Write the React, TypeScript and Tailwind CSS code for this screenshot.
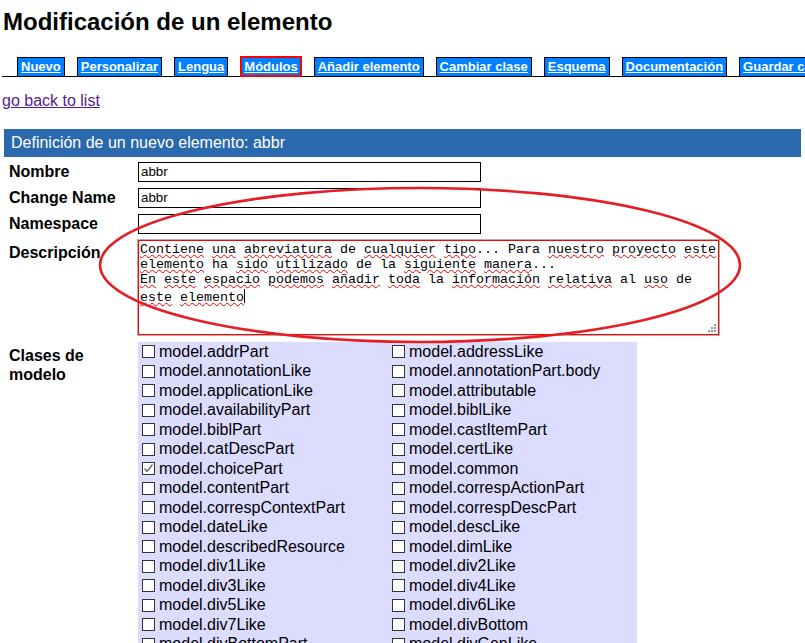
const tabs = [
  'Nuevo',
  'Personalizar',
  'Lengua',
  'Módulos',
  'Añadir elemento',
  'Cambiar clase',
  'Esquema',
  'Documentación',
  'Guardar cambios',
]

const clases = [
  'addrPart', 'addressLike',
  'annotationLike', 'annotationPart.body',
  'applicationLike', 'attributable',
  'availabilityPart', 'biblLike',
  'biblPart', 'castItemPart',
  'catDescPart', 'certLike',
  'choicePart', 'common',
  'contentPart', 'correspActionPart',
  'correspContextPart', 'correspDescPart',
  'dateLike', 'descLike',
  'describedResource', 'dimLike',
  'div1Like', 'div2Like',
  'div3Like', 'div4Like',
  'div5Like', 'div6Like',
  'div7Like', 'divBottom',
  'divBottomPart', 'divGenLike',
]

// words with a spell-check squiggle; the rest are plain
const descLines: [string, boolean][][] = [
  [['Contiene', true], [' ', false], ['una', true], [' ', false], ['abreviatura', true], [' de ', false], ['cualquier', true], [' ', false], ['tipo', true], ['... Para ', false], ['nuestro', true], [' ', false], ['proyecto', true], [' ', false], ['este', true]],
  [['elemento', true], [' ha ', false], ['sido', true], [' ', false], ['utilizado', true], [' de la ', false], ['siguiente', true], [' ', false], ['manera', true], ['...', false]],
  [['En', true], [' ', false], ['este', true], [' ', false], ['espacio', true], [' ', false], ['podemos', true], [' ', false], ['añadir', true], [' ', false], ['toda', true], [' la ', false], ['información', true], [' ', false], ['relativa', true], [' al ', false], ['uso', true], [' de', false]],
  [['este', true], [' ', false], ['elemento', true]],
]

function Check({ checked }: { checked?: boolean }) {
  return (
    <span className="flex h-[13px] w-[13px] shrink-0 items-center justify-center border border-[#333] bg-white">
      {checked && (
        <svg width="11" height="11" viewBox="0 0 11 11">
          <polyline points="1.5,5.5 4,8.5 9.5,1.5" fill="none" stroke="#666" strokeWidth="1.3" />
        </svg>
      )}
    </span>
  )
}

export default function App() {
  return (
    <div className="relative h-[643px] w-[805px] overflow-hidden bg-white font-['Liberation_Sans',Arial,sans-serif] text-black">
      <h1 className="pl-[3px] pt-[8px] text-[24px] font-bold leading-[28px]">Modificación de un elemento</h1>

      <div className="ml-[2px] mt-[21px] flex h-[20px] items-end gap-[12px] whitespace-nowrap border-b border-black pl-[15px]">
        {tabs.map((t) => (
          <span
            key={t}
            className={
              t === 'Módulos'
                ? '-mb-px box-border flex h-[21px] items-center border-2 border-[#ff0000] bg-[#0080ff] px-[2px] text-[13px] font-bold text-white underline'
                : '-mb-px box-border flex h-[20px] items-center border border-black bg-[#0080ff] px-[3px] text-[13px] font-bold text-white underline'
            }
          >
            {t}
          </span>
        ))}
      </div>

      <a href="#" className="ml-[2px] mt-[15px] inline-block text-[16px] leading-[18px] text-[#551a8b] underline">
        go back to list
      </a>

      <div className="mx-[4px] mt-[16px] h-[28px] bg-[#2a69ad] pl-[7px] text-[16px] leading-[28px] text-white">
        Definición de un nuevo elemento: abbr
      </div>

      <div className="mt-[5px] flex flex-col gap-[6px]">
        {[
          ['Nombre', 'abbr'],
          ['Change Name', 'abbr'],
          ['Namespace', ''],
        ].map(([label, value]) => (
          <div key={label} className="flex items-center">
            <span className="w-[138px] shrink-0 pl-[9px] text-[16px] font-bold leading-[18px]">{label}</span>
            <div className="h-[20px] w-[343px] border border-black px-[2px] text-[13.33px] leading-[18px]">{value}</div>
          </div>
        ))}

        <div className="flex items-start">
          <span className="w-[138px] shrink-0 pl-[9px] pt-[4px] text-[16px] font-bold leading-[18px]">Descripción</span>
          <div className="relative h-[95px] w-[581px] border border-[#ff0000] px-[1px] pt-[1px] font-['Liberation_Mono','Courier_New',monospace] text-[13.33px] leading-[15px] shadow-[0_0_0_1px_#b0b0b0]">
            {descLines.map((line, i) => (
              <div key={i} className="whitespace-pre">
                {line.map(([w, bad], j) =>
                  bad ? (
                    <span key={j} className="underline decoration-[#e00] decoration-wavy decoration-1 underline-offset-[1px]">
                      {w}
                    </span>
                  ) : (
                    <span key={j}>{w}</span>
                  )
                )}
                {i === 3 && <span className="inline-block h-[14px] w-px translate-y-[2px] bg-black" />}
              </div>
            ))}
            <svg className="absolute bottom-[2px] right-[2px]" width="8" height="8" viewBox="0 0 8 8">
              <g fill="#999">
                <rect x="6" y="0" width="2" height="2" />
                <rect x="3" y="3" width="2" height="2" />
                <rect x="6" y="3" width="2" height="2" />
                <rect x="0" y="6" width="2" height="2" />
                <rect x="3" y="6" width="2" height="2" />
                <rect x="6" y="6" width="2" height="2" />
              </g>
            </svg>
          </div>
        </div>

        <div className="mt-[1px] flex items-start">
          <span className="w-[138px] shrink-0 pl-[9px] pr-[8px] pt-[4px] text-[16px] font-bold leading-[19px]">Clases de modelo</span>
          <div className="grid w-[499px] grid-cols-[250px_1fr] bg-[#dcdcff]">
            {clases.map((c) => (
              <label key={c} className="flex h-[19.5px] items-center gap-[4px] pl-[4px] text-[16px] leading-[18px]">
                <Check checked={c === 'choicePart'} />
                <span>model.{c}</span>
              </label>
            ))}
          </div>
        </div>
      </div>

      <svg className="pointer-events-none absolute left-0 top-0" width="805" height="643" viewBox="0 0 805 643">
        <ellipse cx="420" cy="265" rx="320" ry="77" fill="none" stroke="#e51e25" strokeWidth="2.6" />
      </svg>
    </div>
  )
}
